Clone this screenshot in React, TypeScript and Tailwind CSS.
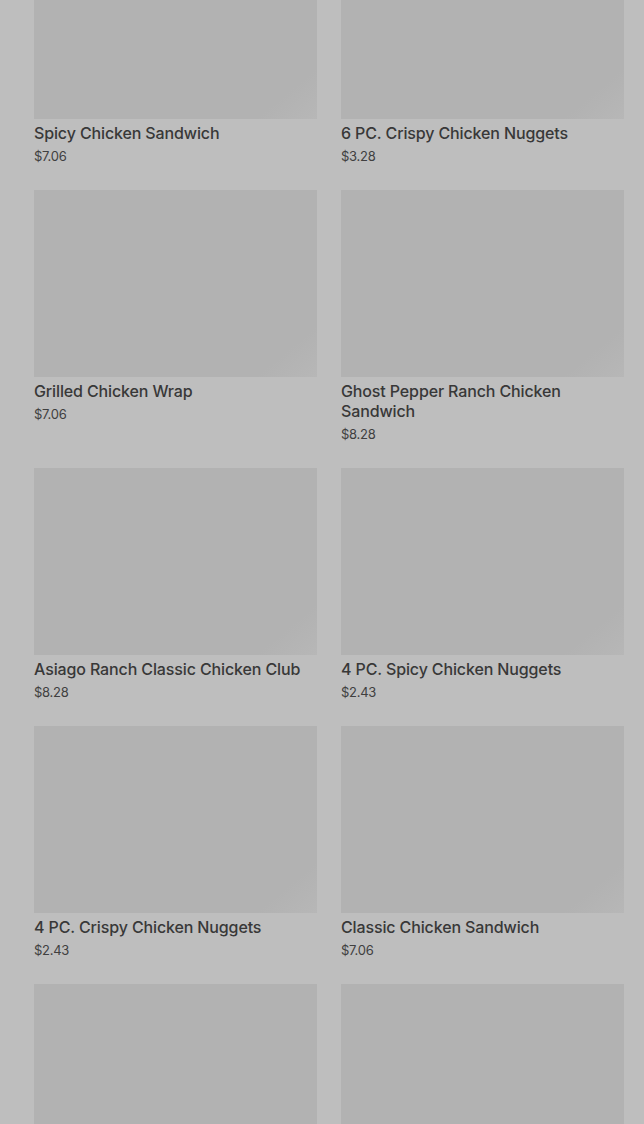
type Item = { name: string; price: string };

const items: Item[] = [
  { name: "Spicy Chicken Sandwich", price: "$7.06" },
  { name: "6 PC. Crispy Chicken Nuggets", price: "$3.28" },
  { name: "Grilled Chicken Wrap", price: "$7.06" },
  { name: "Ghost Pepper Ranch Chicken Sandwich", price: "$8.28" },
  { name: "Asiago Ranch Classic Chicken Club", price: "$8.28" },
  { name: "4 PC. Spicy Chicken Nuggets", price: "$2.43" },
  { name: "4 PC. Crispy Chicken Nuggets", price: "$2.43" },
  { name: "Classic Chicken Sandwich", price: "$7.06" },
  { name: "", price: "" },
  { name: "", price: "" },
];

function MenuCard({ item }: { item: Item }) {
  return (
    <div className="flex flex-col">
      <div className="h-[187px] w-full bg-[linear-gradient(140deg,#b2b2b2_88%,#b7b7b7_100%)]" />
      {item.name && (
        <p className="mt-1 text-[16px] font-medium leading-5 tracking-[-0.008em] text-[#383838]">
          {item.name}
        </p>
      )}
      {item.price && (
        <span className="mt-1 text-[13px] leading-[18px] tracking-[-0.02em] text-[#404040]">
          {item.price}
        </span>
      )}
    </div>
  );
}

export default function App() {
  return (
    <div
      className="h-[1124px] overflow-hidden bg-[#bebebe] pl-[34px] pr-[20px]"
      style={{ fontFamily: "Inter, 'Noto Sans', sans-serif" }}
    >
      {/* menu grid, scrolled partway down */}
      <div className="-mt-[68px] grid grid-cols-2 gap-x-6 gap-y-[25px]">
        {items.map((it, i) => (
          <MenuCard key={i} item={it} />
        ))}
      </div>
    </div>
  );
}
